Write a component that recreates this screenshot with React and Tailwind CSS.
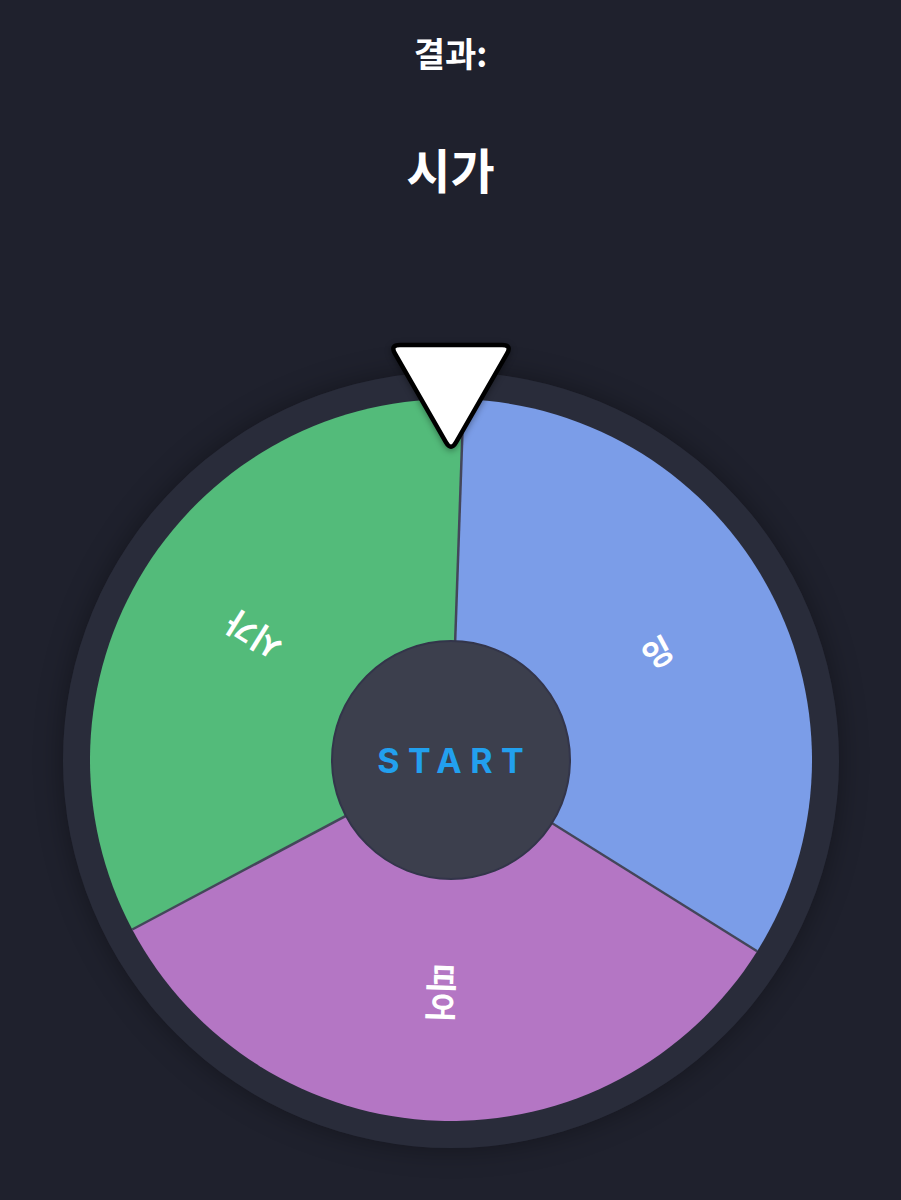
import React from "react";

const CX = 388;
const R_OUT = 361;
const R_LABEL = 233;
const OFFSET = 2;

const segments = [
  { label: "잉", color: "#7b9de8" },
  { label: "띠어", color: "#b476c4" },
  { label: "시가", color: "#53bb7a" },
];

function pt(angle, r) {
  const a = (angle * Math.PI) / 180;
  return [CX + r * Math.sin(a), CX - r * Math.cos(a)];
}

function Wheel() {
  const step = 360 / segments.length;
  return (
    <svg viewBox="0 0 776 776" width="776" height="776" className="block">
      <circle cx={CX} cy={CX} r={388} fill="#292c3a" />
      {segments.map((s, i) => {
        const a0 = OFFSET + i * step;
        const a1 = a0 + step;
        const [x0, y0] = pt(a0, R_OUT);
        const [x1, y1] = pt(a1, R_OUT);
        return (
          <path
            key={s.label}
            d={`M${CX} ${CX} L${x0} ${y0} A${R_OUT} ${R_OUT} 0 0 1 ${x1} ${y1} Z`}
            fill={s.color}
          />
        );
      })}
      {segments.map((s, i) => {
        const a = OFFSET + i * step;
        const [x, y] = pt(a, R_OUT);
        return <line key={s.label + "-l"} x1={CX} y1={CX} x2={x} y2={y} stroke="#44465a" strokeWidth="2.5" />;
      })}
      {segments.map((s, i) => {
        const mid = OFFSET + i * step + step / 2;
        const [lx, ly] = pt(mid, R_LABEL);
        return (
          <text
            key={s.label + "-t"}
            x={lx}
            y={ly}
            fill="#ffffff"
            fontSize="32"
            fontWeight="700"
            textAnchor="middle"
            dominantBaseline="central"
            fontFamily="'Noto Sans CJK KR', 'Noto Sans', sans-serif"
            transform={`rotate(${mid - 90} ${lx} ${ly})`}
          >
            {s.label}
          </text>
        );
      })}
    </svg>
  );
}

function Pointer() {
  return (
    <svg width="134" height="118" viewBox="0 0 134 118" className="drop-shadow-[0_2px_3px_rgba(0,0,0,0.35)]">
      <path
        d="M16 6 L118 6 Q128 6 123 14.66 L72 103.34 Q67 112 62 103.34 L11 14.66 Q6 6 16 6 Z"
        fill="#ffffff"
        stroke="#000000"
        strokeWidth="4.5"
        strokeLinejoin="round"
      />
    </svg>
  );
}

export default function App() {
  return (
    <div className="min-h-screen w-full bg-[#1f212d] flex flex-col items-center text-white font-['Noto_Sans_CJK_KR','Noto_Sans',sans-serif]">
      <div className="mt-[36px] text-[34px] leading-none font-bold">결과:</div>
      <div className="mt-[74px] text-[48px] leading-none font-bold">시가</div>
      <div className="relative mt-[180px] w-[776px] h-[776px] rounded-full shadow-[0_0_28px_rgba(0,0,0,0.35)]">
        <Wheel />
        <div className="absolute left-1/2 top-[-33px] -translate-x-1/2">
          <Pointer />
        </div>
        <button className="absolute left-1/2 top-1/2 -translate-x-1/2 -translate-y-1/2 w-[240px] h-[240px] rounded-full bg-[#3c3f4d] border-2 border-[#33354a] flex items-center justify-center">
          <span className="pl-[0.25em] text-[34px] font-bold tracking-[0.25em] text-[#22a0ee] font-['Inter',sans-serif]">
            START
          </span>
        </button>
      </div>
    </div>
  );
}
